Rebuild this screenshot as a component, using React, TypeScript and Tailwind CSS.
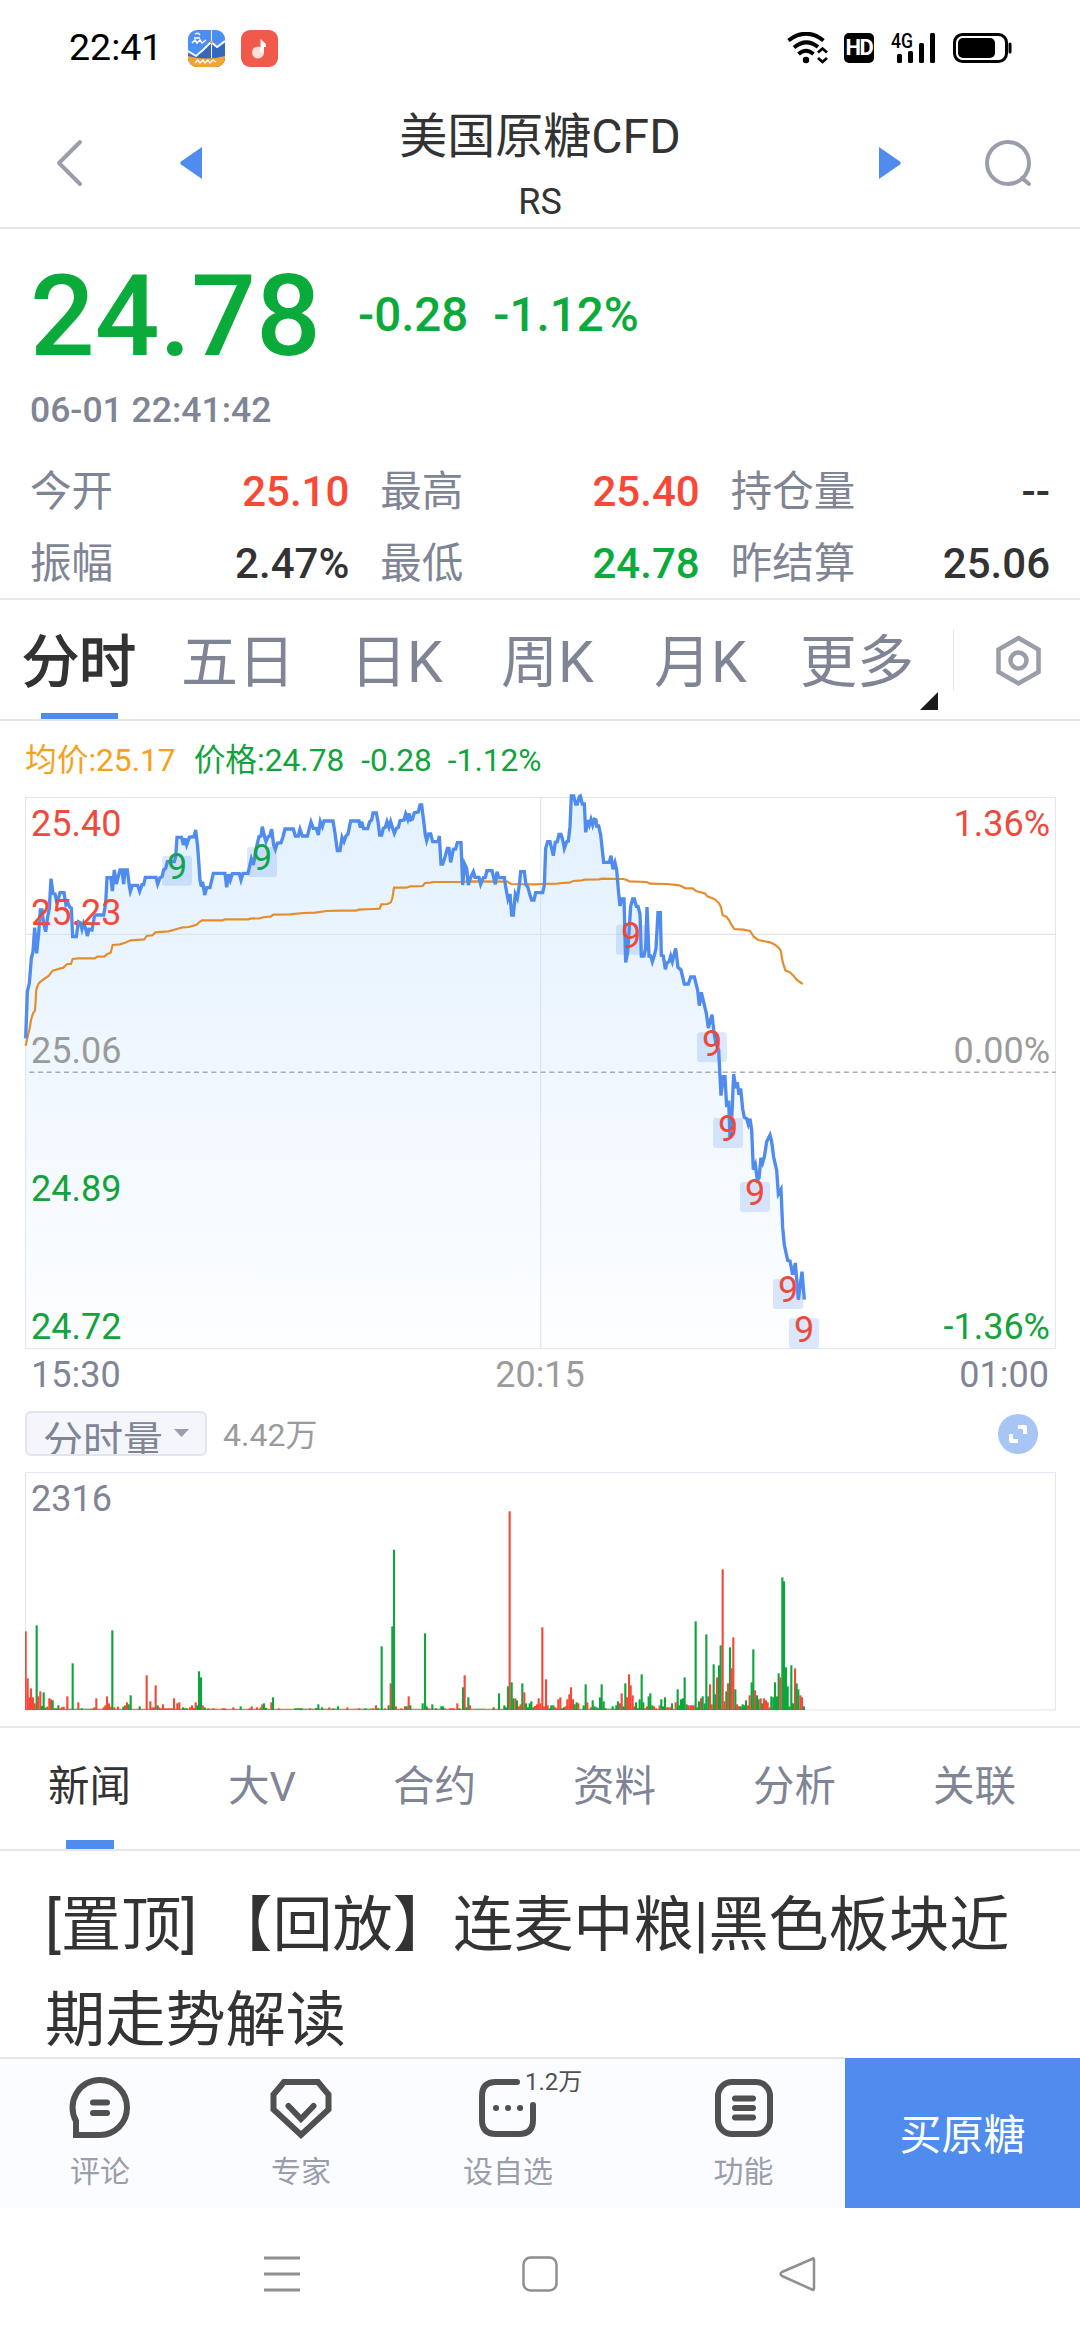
import type { ReactNode } from "react";

type Point = [number, number];

// Plot units are a third of a pixel
const PRICE_LINE: Point[] = [
  [77, 775], [82, 635], [88, 610], [94, 535], [99, 515], [104, 443], [110, 520], [116, 460], [121, 390], [126, 390],
  [131, 430], [137, 455], [143, 410], [148, 385], [153, 296], [159, 340], [165, 342], [171, 370], [180, 338], [192, 338],
  [198, 375], [204, 370], [210, 382], [214, 384], [218, 470], [229, 470], [235, 425], [241, 428], [246, 448], [251, 430],
  [257, 445], [262, 468], [267, 448], [276, 450], [284, 405], [311, 405], [317, 370], [321, 293], [333, 293], [337, 333],
  [343, 270], [349, 312], [360, 270], [366, 270], [371, 312], [375, 270], [382, 270], [388, 318], [391, 334], [397, 316],
  [413, 316], [419, 334], [426, 314], [431, 314], [436, 292], [468, 292], [473, 312], [480, 293], [486, 290], [491, 270],
  [497, 265], [502, 245], [523, 245], [527, 230], [531, 172], [545, 172], [550, 195], [555, 175], [560, 195], [568, 172],
  [582, 170], [587, 150], [593, 200], [600, 300], [604, 320], [608, 305], [614, 345], [620, 323], [630, 323], [640, 280],
  [675, 280], [680, 322], [686, 283], [691, 300], [697, 281], [718, 281], [723, 300], [729, 280], [744, 280], [754, 237],
  [760, 255], [766, 222], [772, 190], [777, 170], [783, 168], [787, 140], [793, 168], [798, 185], [804, 170], [809, 168],
  [815, 148], [821, 195], [826, 208], [832, 190], [843, 188], [849, 170], [855, 147], [880, 147], [886, 168], [895, 168],
  [900, 148], [907, 168], [922, 168], [933, 126], [940, 145], [949, 145], [955, 165], [961, 125], [967, 140], [972, 123],
  [999, 123], [1005, 160], [1012, 212], [1020, 212], [1026, 172], [1032, 185], [1038, 168], [1044, 162], [1052, 123],
  [1077, 123], [1081, 143], [1085, 125], [1091, 146], [1103, 146], [1109, 125], [1115, 120], [1119, 99], [1129, 99],
  [1134, 125], [1139, 165], [1145, 165], [1150, 145], [1156, 142], [1161, 125], [1167, 142], [1172, 125], [1178, 145],
  [1183, 160], [1189, 145], [1195, 142], [1200, 122], [1212, 120], [1217, 102], [1223, 118], [1227, 100], [1232, 120],
  [1237, 118], [1243, 98], [1255, 96], [1260, 75], [1265, 75], [1270, 115], [1276, 165], [1280, 182], [1286, 162],
  [1292, 162], [1298, 185], [1314, 185], [1318, 168], [1323, 252], [1328, 252], [1334, 235], [1342, 205], [1347, 205],
  [1352, 247], [1360, 208], [1367, 207], [1372, 188], [1383, 188], [1388, 315], [1394, 252], [1400, 265], [1405, 315],
  [1412, 292], [1420, 275], [1425, 292], [1437, 292], [1442, 313], [1450, 293], [1456, 292], [1461, 272], [1476, 272],
  [1481, 292], [1486, 313], [1491, 275], [1496, 292], [1513, 293], [1517, 320], [1524, 358], [1530, 342], [1535, 405],
  [1540, 405], [1546, 342], [1552, 355], [1558, 315], [1562, 275], [1573, 275], [1578, 315], [1583, 320], [1590, 345],
  [1595, 360], [1602, 360], [1607, 338], [1628, 338], [1633, 315], [1637, 205], [1643, 185], [1650, 185], [1660, 227],
  [1666, 187], [1672, 185], [1677, 163], [1683, 163], [1688, 180], [1693, 205], [1700, 185], [1705, 183], [1710, 140],
  [1714, 48], [1721, 48], [1727, 72], [1732, 72], [1738, 50], [1741, 48], [1747, 72], [1753, 72], [1757, 157],
  [1763, 120], [1768, 135], [1773, 118], [1778, 135], [1783, 118], [1788, 120], [1790, 138], [1796, 138], [1802, 165],
  [1811, 247], [1828, 247], [1833, 227], [1839, 268], [1845, 248], [1850, 270], [1856, 340], [1860, 378], [1864, 357],
  [1872, 357], [1877, 547], [1883, 517], [1892, 379], [1898, 357], [1903, 357], [1909, 379], [1914, 379], [1920, 402],
  [1924, 528], [1932, 528], [1937, 505], [1941, 381], [1947, 528], [1952, 528], [1957, 545], [1963, 526], [1968, 505],
  [1974, 398], [1981, 398], [1984, 526], [1990, 528], [1996, 568], [2001, 549], [2007, 545], [2012, 528], [2017, 545],
  [2027, 505], [2034, 562], [2043, 570], [2053, 612], [2065, 612], [2072, 591], [2083, 591], [2093, 631], [2098, 677],
  [2104, 637], [2119, 700], [2125, 744], [2136, 704], [2142, 758], [2148, 792], [2156, 809], [2160, 890], [2163, 947],
  [2170, 890], [2175, 890], [2180, 981], [2186, 962], [2190, 1073], [2196, 999], [2201, 882], [2207, 924], [2212, 907],
  [2217, 944], [2222, 925], [2228, 987], [2233, 1012], [2240, 1016], [2245, 1033], [2250, 1016], [2255, 1050],
  [2260, 1169], [2266, 1154], [2272, 1200], [2277, 1194], [2283, 1133], [2288, 1148], [2293, 1131], [2300, 1085],
  [2310, 1065], [2315, 1085], [2321, 1131], [2330, 1171], [2335, 1242], [2343, 1228], [2348, 1343], [2353, 1395],
  [2363, 1441], [2370, 1443], [2378, 1484], [2386, 1449], [2395, 1559], [2406, 1475], [2413, 1559],
];

const AVERAGE_LINE: Point[] = [
  [77, 797], [84, 765], [88, 750], [93, 720], [99, 700], [105, 692], [109, 628], [116, 610], [122, 605], [132, 597],
  [146, 588], [158, 572], [172, 568], [190, 563], [202, 552], [213, 552], [218, 537], [235, 535], [285, 535], [292, 530],
  [313, 530], [322, 522], [332, 518], [338, 495], [360, 493], [375, 488], [392, 481], [433, 478], [440, 468], [458, 466],
  [466, 457], [505, 454], [530, 447], [548, 442], [566, 441], [590, 434], [598, 426], [606, 421], [668, 421], [675, 418],
  [745, 418], [750, 416], [778, 415], [793, 411], [812, 410], [820, 404], [870, 403], [910, 399], [945, 398], [980, 393],
  [1018, 392], [1068, 392], [1075, 389], [1120, 387], [1139, 386], [1144, 373], [1163, 372], [1172, 367], [1177, 355],
  [1182, 323], [1220, 323], [1230, 319], [1268, 318], [1275, 309], [1292, 308], [1300, 306], [1390, 306], [1400, 304],
  [1522, 305], [1533, 312], [1605, 313], [1620, 312], [1672, 311], [1685, 309], [1708, 308], [1720, 303], [1745, 301],
  [1755, 299], [1798, 298], [1805, 296], [1870, 297], [1880, 300], [1888, 304], [1940, 306], [1950, 311], [2000, 312],
  [2038, 316], [2057, 325], [2078, 325], [2088, 333], [2115, 340], [2122, 349], [2145, 358], [2157, 370], [2163, 382],
  [2168, 406], [2180, 411], [2187, 420], [2193, 432], [2203, 447], [2230, 449], [2250, 453], [2262, 471], [2275, 480],
  [2310, 487], [2325, 494], [2338, 505], [2342, 512], [2348, 545], [2356, 571], [2370, 577], [2380, 587], [2390, 599],
  [2408, 612],
];

// [x, height], a negative height is a falling minute
const VOLUME: Point[] = [
  [77, 236], [83, 95], [88, 38], [93, 65], [99, 38], [104, 20], [110, -254], [115, 41], [121, 56], [126, -12],
  [131, -53], [137, -7], [142, 10], [148, 35], [153, 32], [158, -29], [164, -5], [169, -5], [175, -14], [180, 5],
  [186, 8], [191, 10], [202, 41], [218, -140], [235, 23], [245, -5], [278, 5], [284, 8], [289, 35], [311, 8], [316, 14],
  [321, 41], [327, 20], [332, 10], [337, -239], [343, 8], [354, 10], [370, -10], [375, 14], [381, 23], [386, -17],
  [392, -44], [419, -11], [440, 104], [451, 26], [457, 8], [462, 8], [467, 74], [473, -14], [478, 8], [484, 5],
  [489, 17], [494, 5], [500, 5], [506, 5], [511, 5], [516, 5], [522, 35], [532, 20], [538, 23], [549, -8], [554, -5],
  [560, -5], [570, 8], [576, 14], [581, 6], [587, 23], [592, -14], [597, -116], [603, -98], [608, 14], [614, -8],
  [625, 5], [641, 5], [668, 5], [674, 5], [700, 8], [722, -11], [749, 5], [755, 11], [771, 8], [782, 8], [787, 17],
  [792, -20], [798, -6], [814, 23], [819, -38], [836, 5], [887, -5], [893, -5], [899, -5], [905, -5], [930, 5],
  [949, -6], [955, -17], [966, -8], [988, 8], [1000, -5], [1014, -11], [1042, 8], [1077, 5], [1096, -5], [1118, 5],
  [1128, 14], [1134, -5], [1145, -191], [1155, 5], [1166, -14], [1172, 80], [1177, -251], [1182, -481], [1188, 11],
  [1204, 5], [1215, 11], [1220, -11], [1226, 41], [1231, -14], [1268, -20], [1275, -230], [1280, -11], [1286, 5],
  [1297, -17], [1308, -5], [1324, -11], [1329, -11], [1335, 5], [1350, 5], [1356, 5], [1361, 5], [1372, 20],
  [1378, -5], [1389, -68], [1394, 104], [1399, -8], [1405, -38], [1410, 14], [1481, -8], [1497, -50], [1513, -14],
  [1518, -8], [1524, -71], [1529, 596], [1535, -83], [1540, -35], [1546, 35], [1551, -29], [1557, 11], [1562, 17],
  [1567, -80], [1573, 53], [1578, -20], [1584, -8], [1589, -20], [1594, -26], [1600, -8], [1605, 12], [1611, 17],
  [1616, 35], [1621, 20], [1627, 248], [1632, 11], [1638, 92], [1643, 14], [1649, -5], [1654, -14], [1660, -14],
  [1665, 8], [1670, 5], [1675, 32], [1681, 38], [1686, -5], [1692, -8], [1697, 11], [1702, 32], [1708, 47], [1713, 68],
  [1719, 32], [1724, -17], [1730, -23], [1735, 20], [1751, -14], [1757, -77], [1762, 23], [1773, 8], [1778, -29],
  [1784, -11], [1790, -8], [1795, -5], [1800, -38], [1805, -77], [1811, -26], [1816, -5], [1838, -11], [1849, -14],
  [1854, -26], [1860, 20], [1865, 50], [1870, -11], [1876, -80], [1881, 38], [1887, 107], [1892, 74], [1898, 44],
  [1903, 11], [1908, -23], [1914, -5], [1919, -32], [1925, -107], [1930, -23], [1935, 5], [1941, 11], [1946, -41],
  [1951, -50], [1957, -14], [1962, 11], [1968, 5], [1979, 14], [1984, -32], [1989, -11], [1995, -38], [2000, 8],
  [2005, 8], [2011, 8], [2016, -20], [2027, 23], [2033, -62], [2038, -14], [2043, -32], [2049, -35], [2054, -98],
  [2060, -17], [2065, 14], [2071, 14], [2076, 14], [2081, 14], [2087, -266], [2092, -8], [2097, -26], [2103, 35],
  [2108, -41], [2114, -20], [2119, -227], [2125, -41], [2130, 77], [2135, 17], [2141, -137], [2146, -47], [2151, 98],
  [2157, -134], [2162, -194], [2168, 422], [2173, 26], [2179, -56], [2184, 80], [2190, -188], [2195, 125], [2200, 218],
  [2206, -62], [2211, 17], [2217, 11], [2222, -11], [2228, -17], [2233, -14], [2238, -29], [2244, 14], [2249, 44],
  [2255, -83], [2260, -182], [2265, 59], [2271, -44], [2276, -32], [2282, 35], [2287, -20], [2292, 35], [2298, 29],
  [2303, 23], [2309, 8], [2314, -41], [2320, -38], [2325, -83], [2331, -41], [2336, -110], [2341, 98], [2347, -398],
  [2352, -386], [2358, -128], [2363, -71], [2368, -11], [2374, -134], [2379, -20], [2385, 125], [2390, -80],
  [2395, -62], [2401, 44], [2406, 38], [2412, -11],
];

// [left, top, rising]
const SIGNALS: [number, number, boolean][] = [
  [486, 227, true], [741, 201, true], [1848, 434, false], [2091, 757, false],
  [2139, 1014, false], [2220, 1206, false], [2319, 1497, false], [2367, 1615, false],
];

const QUOTES = [
  { label: "今开", value: "25.10", color: "text-[#f94836]" },
  { label: "最高", value: "25.40", color: "text-[#f94836]" },
  { label: "持仓量", value: "--", color: "text-[#333333]" },
  { label: "振幅", value: "2.47%", color: "text-[#333333]" },
  { label: "最低", value: "24.78", color: "text-[#0aab3a]" },
  { label: "昨结算", value: "25.06", color: "text-[#333333]" },
];

const NEWS_TABS = ["新闻", "大V", "合约", "资料", "分析", "关联"];

const toPoints = (points: Point[]) => points.map((p) => p.join(",")).join(" ");

function StatusBar() {
  return (
    <div className="flex h-24 items-center pl-[69px] pr-[67px] text-black">
      <span className="w-[119px] text-[37.500px] leading-none">22:41</span>
      <svg width="37" height="37" viewBox="0 0 37 37">
        <defs>
          <clipPath id="app">
            <rect width="37" height="37" rx="9" />
          </clipPath>
        </defs>
        <g clipPath="url(#app)">
          <rect width="37" height="37" fill="#4b8ff5" />
          <path d="M0 24 L8 27 L16 19 L23 14 L30 18 L37 13 V37 H0Z" fill="#3568bd" />
          <path d="M0 21 L8 26 L15 20 L23 12 L29 17 L37 11" fill="none" stroke="#fff" strokeWidth="1.8" />
          <path d="M23.5 0 V28" stroke="#fff" strokeWidth="1" />
          <circle cx="23.5" cy="12" r="1.6" fill="#f6a42b" />
          <path d="M0 26 Q18 31 37 26 V37 H0Z" fill="#f5a52d" />
          <path d="M7 4 q3 -2 5 1 M6 8 h6 M4 13 l3 -3 2 3 3 -3 2 3 4 -3" fill="none" stroke="#fff" strokeWidth="1.5" />
          <path d="M7 33 l3 -3 2 3 3 -3 2 3 3 -3 2 3 3 -3 3 2" fill="none" stroke="#fff" strokeWidth="1.3" />
        </g>
      </svg>
      <svg className="ml-[16px]" width="37" height="37" viewBox="0 0 37 37">
        <rect width="37" height="37" rx="9" fill="#f15a4b" />
        <circle cx="17" cy="22.5" r="6" fill="#fde0dc" />
        <path d="M19.5 9 L25 14 V17 L23 17 V23 H19.5Z" fill="#fff" />
      </svg>
      <div className="ml-auto flex items-center">
        <svg width="41" height="32" viewBox="0 0 41 32" fill="none" stroke="#000">
          <path d="M1.5 8.5 Q19 -5 36.5 8.5" strokeWidth="4" />
          <path d="M7 15.5 Q19 5.500 31 15" strokeWidth="4" />
          <path d="M11.500 22 Q19 15.500 26.500 22" strokeWidth="4" />
          <circle cx="19" cy="28" r="3.200" fill="#000" stroke="none" />
          <path d="M31 20.500 L35.500 16.500 L40 20.500 M31 26 L35.500 30 L40 26" strokeWidth="2.800" />
        </svg>
        <span className="ml-[16px] flex h-[30px] w-[30px] items-center justify-center rounded-[5px] bg-black text-[22px] font-bold leading-none tracking-[-1.5px] text-white">
          HD
        </span>
        <svg className="ml-[17px] overflow-visible" width="45" height="32" viewBox="0 0 45 32">
          <text x="0" y="15.500" fontSize="20" fontWeight="500" textLength="22" lengthAdjust="spacingAndGlyphs">4G</text>
          <rect x="6" y="22" width="5" height="9" rx="1.500" />
          <rect x="17" y="19" width="5" height="12" rx="1.500" />
          <rect x="28" y="11" width="5" height="20" rx="1.500" />
          <rect x="39" y="1" width="5" height="30" rx="1.500" />
        </svg>
        <svg className="ml-[17px]" width="60" height="32" viewBox="0 0 60 32">
          <rect x="1.500" y="2.500" width="52" height="27" rx="8" fill="none" stroke="#000" strokeWidth="3" />
          <rect x="5" y="6" width="37" height="20" rx="5" />
          <rect x="55.500" y="10.500" width="3" height="11" rx="1.500" />
        </svg>
      </div>
    </div>
  );
}

function Header() {
  return (
    <div className="flex h-[133px] items-center justify-between border-b-2 border-[#e4e6ec] pl-[56px] pr-[47px] pt-[2px]">
      <div className="flex w-[191px] items-center">
        <svg width="27" height="48" viewBox="0 0 27 48" fill="none" stroke="#9a9eaa" strokeWidth="4" strokeLinecap="round" strokeLinejoin="round">
          <path d="M24 3 L3 24 L24 45" />
        </svg>
        <svg className="ml-[97px]" width="22" height="34" viewBox="0 0 22 34">
          <path d="M22 1 V33 L1 18.500 Q-0.500 17 1 15.500Z" fill="#4f8cee" />
        </svg>
      </div>
      <div className="flex flex-col items-center pt-[5px] text-[#333333]">
        <h1 className="h-[66px] text-[48px] leading-[66px]">美国原糖CFD</h1>
        <span className="mt-[7px] text-[36px] leading-[50px]">RS</span>
      </div>
      <div className="flex w-[200px] items-center justify-end">
        <svg className="mr-[83px]" width="22" height="34" viewBox="0 0 22 34">
          <path d="M0 1 V33 L21 18.500 Q22.500 17 21 15.500Z" fill="#4f8cee" />
        </svg>
        <svg width="49" height="50" viewBox="0 0 49 50" fill="none" stroke="#9a9eaa" strokeWidth="4">
          <circle cx="24" cy="25" r="21" />
          <path d="M38 40 L45 46" strokeLinecap="round" />
        </svg>
      </div>
    </div>
  );
}

function Quote() {
  return (
    <div className="h-[371px] border-b-2 border-[#e8e8ec] pl-[30px] pr-[30px] pt-[27px]">
      <div className="flex h-[120px] items-center font-medium text-[#0aab3a]">
        <span className="w-[328px] text-[114px] leading-[120px]">24.78</span>
        <span className="text-[47.500px]">-0.28</span>
        <span className="ml-[25px] text-[47.500px]">-1.12%</span>
      </div>
      <div className="mt-[10px] text-[35.500px] font-medium leading-[48px] text-[#808595]">06-01 22:41:42</div>
      <div className="mt-[22px] grid grid-cols-3 gap-x-[31px]">
        {QUOTES.map((q) => (
          <div key={q.label} className="flex h-[72px] items-center justify-between text-[42px] leading-none">
            <span className="text-[41.500px] text-[#808595]">{q.label}</span>
            <span className={`font-medium ${q.color}`}>{q.value}</span>
          </div>
        ))}
      </div>
    </div>
  );
}

function PeriodTabs() {
  return (
    <div className="flex h-[121px] border-b-2 border-[#e4e6ec] text-[57px] leading-[125px] text-[#808595]">
      <div className="relative ml-[22px] w-[159px] text-[#333333] [-webkit-text-stroke:1.5px_#333333]">
        分时
        <span className="absolute bottom-0 left-[19px] h-[6px] w-[77px] bg-[#4f8cee]" />
      </div>
      <div className="w-[169px]">五日</div>
      <div className="w-[151px]">日K</div>
      <div className="w-[153px]">周K</div>
      <div className="w-[146px]">月K</div>
      <div className="relative w-[153px]">
        更多
        <svg className="absolute bottom-[9px] right-[15px]" width="18" height="18" viewBox="0 0 18 18">
          <path d="M18 0 V18 H0Z" fill="#1a1a1a" />
        </svg>
      </div>
      <div className="mt-[30px] h-[60px] w-px bg-[#e0e2ea]" />
      <svg className="ml-[41px] mt-[34px]" width="47" height="54" viewBox="0 0 47 54" fill="none" stroke="#9a9eaa" strokeWidth="4.500">
        <path d="M23.500 4 L43.500 15.500 V38 L23.500 49.500 L3.500 38 V15.500Z" />
        <circle cx="23.500" cy="26.500" r="8" />
      </svg>
    </div>
  );
}

function PriceChart() {
  const area = `77,1707 ${toPoints(PRICE_LINE)} 2413,1707`;
  return (
    <svg className="block overflow-visible" width="1031" height="552" viewBox="75 51 3093 1656">
      <defs>
        <linearGradient id="area" gradientUnits="userSpaceOnUse" x1="0" y1="51" x2="0" y2="1707">
          <stop offset="0" stopColor="#e3f1ff" />
          <stop offset="1" stopColor="#fdfeff" />
        </linearGradient>
      </defs>
      <polygon points={area} fill="url(#area)" />
      <g fill="none" stroke="#e4e6f0" strokeWidth="3.500">
        <rect x="76.500" y="52.500" width="3090" height="1653" />
        <path d="M77 463 H3167 M1622 52 V1706" stroke="#d9dfea" strokeOpacity="0.8" />
      </g>
      <path d="M88 877 H3167" stroke="#a9acb6" strokeWidth="4.500" strokeDasharray="15 11" />
      <polyline points={toPoints(AVERAGE_LINE)} fill="none" stroke="#e58d2b" strokeWidth="6.500" />
      <polyline points={toPoints(PRICE_LINE)} fill="none" stroke="#4f8cee" strokeWidth="10" />
      <g fontSize="108">
        {SIGNALS.map(([x, y, up]) => (
          <g key={x}>
            <rect x={x} y={y} width="90" height="90" rx="9" fill="#4f8cee" fillOpacity="0.2" />
            <text x={x + 45} y={y + 70} textAnchor="middle" fill={up ? "#12a54a" : "#ee4a3c"}>9</text>
          </g>
        ))}
        <g fill="#f04a3c">
          <text x="93" y="168">25.40</text>
          <text x="93" y="435">25.23</text>
          <text x="3150" y="168" textAnchor="end">1.36%</text>
        </g>
        <g fill="#9b9b9b">
          <text x="93" y="849">25.06</text>
          <text x="3150" y="849" textAnchor="end">0.00%</text>
        </g>
        <g fill="#12a33c">
          <text x="93" y="1263">24.89</text>
          <text x="93" y="1676">24.72</text>
          <text x="3150" y="1676" textAnchor="end">-1.36%</text>
        </g>
      </g>
    </svg>
  );
}

function VolumeChart() {
  return (
    <svg className="mt-[16px] block" width="1031" height="239" viewBox="75 -25 3093 717">
      <rect x="76.500" y="-23.500" width="3090" height="712" fill="none" stroke="#e4e6f0" strokeWidth="3.500" />
      <path d="M77 687 H2414" stroke="#f0705f" strokeWidth="4" />
      <path d="M205 687 H275 M600 687 H640 M880 687 H1010 M1060 687 H1150 M1290 687 H1330 M1420 687 H1455 M1800 687 H1900" stroke="#4fb573" strokeWidth="4" />
      {VOLUME.map(([x, h]) => (
        <rect key={x} x={x - 3.2} y={689 - Math.abs(h)} width="6.400" height={Math.abs(h)} fill={h > 0 ? "#f4493a" : "#0fa53e"} />
      ))}
      <text x="93" y="93" fontSize="108" fill="#808595">2316</text>
    </svg>
  );
}

function ChartPanel() {
  return (
    <div className="px-[25px]">
      <div className="flex h-[76px] items-center pt-[4px] text-[31.700px] leading-none text-[#12a33c]">
        <span className="text-[#f5a11c]">均价:25.17</span>
        <span className="ml-[18px]">价格:24.78</span>
        <span className="ml-[17px]">-0.28</span>
        <span className="ml-[16px]">-1.12%</span>
      </div>
      <PriceChart />
      <div className="flex h-[51px] items-center justify-between px-[6px] text-[36px] leading-none text-[#808595]">
        <span>15:30</span>
        <span className="text-[#9b9b9b]">20:15</span>
        <span>01:00</span>
      </div>
      <div className="mt-[11px] flex h-[45px] items-center">
        <button className="flex h-[45px] w-[182px] items-center overflow-hidden rounded-[6px] border-2 border-[#e2e4ee] bg-[#f4f6fc] pl-[16px] text-left text-[40px] leading-none text-[#808595]">
          <span className="pt-[16px]">分时量</span>
          <svg className="ml-[11px]" width="15" height="9" viewBox="0 0 15 9">
            <path d="M0 0 H15 L7.500 8Z" fill="#9a9eaa" />
          </svg>
        </button>
        <span className="ml-[16px] pt-[2px] text-[32px] leading-none text-[#9b9b9b]">4.42万</span>
        <svg className="ml-auto mr-[17px]" width="40" height="40" viewBox="0 0 40 40">
          <circle cx="20" cy="20" r="20" fill="#a7c6f6" />
          <path d="M20 13 H27 V20 M13 20 V27 H20" fill="none" stroke="#fff" strokeWidth="4" strokeLinejoin="round" />
        </svg>
      </div>
      <VolumeChart />
    </div>
  );
}

function NewsTabs() {
  return (
    <div className="mt-[15px] flex h-[125px] justify-between border-y-2 border-[#e6e7ec] pl-[48px] pr-[64px] text-[41.500px] leading-[118px] text-[#808595]">
      {NEWS_TABS.map((tab, i) => (
        <div key={tab} className={i === 0 ? "relative text-[#333333]" : ""}>
          {tab}
          {i === 0 && <span className="absolute bottom-0 left-[18px] h-[9px] w-[48px] bg-[#4f8cee]" />}
        </div>
      ))}
    </div>
  );
}

function Action({ label, className, children }: { label: string; className: string; children: ReactNode }) {
  return (
    <div className={`flex flex-col items-center pt-[17px] ${className}`}>
      <svg className="overflow-visible" width="64" height="64" viewBox="0 0 64 64" fill="none" stroke="#505050" strokeWidth="6">
        {children}
      </svg>
      <span className="mt-[10px] text-[30px] leading-[44px] text-[#9a9eaa]">{label}</span>
    </div>
  );
}

function ActionBar() {
  return (
    <div className="flex h-[151px] bg-[#fbfcff]">
      <div className="flex flex-1 border-t-2 border-[#e4e6ec]">
        <Action label="评论" className="w-[200px]">
          <path d="M32 4 A27 27.500 0 1 1 32 59 H8 V45 A27 27.500 0 0 1 32 4Z" />
          <path d="M25 26.500 H39 M25 37 H39" strokeLinecap="round" />
        </Action>
        <Action label="专家" className="w-[202px]">
          <path d="M15 6 H49 L59.500 18.500 V33.500 L32 59 L4.500 33.500 V18.500Z" />
          <path d="M19.500 30 L32 43 L44.500 30" strokeLinecap="round" />
        </Action>
        <Action label="设自选" className="w-[212px]">
          <path d="M41 6 H20 Q6 6 6 20 V44 Q6 58 20 58 H43 Q57 58 57 44 V29" strokeLinecap="round" />
          <path d="M20 32 h0.100 M32 32 h0.100 M44 32 h0.100" strokeLinecap="round" />
          <text x="49" y="14" fontSize="24" fill="#505050" stroke="none">1.2万</text>
        </Action>
        <Action label="功能" className="w-[231px] pl-[29px] pr-[1px]">
          <rect x="6" y="6" width="52" height="52" rx="14" />
          <path d="M23 22.500 H41 M23 32 H41 M23 41.500 H41" strokeLinecap="round" />
        </Action>
      </div>
      <button className="mt-px w-[235px] bg-[#4f8cee] pt-[4px] text-[42px] text-white">买原糖</button>
    </div>
  );
}

function NavigationBar() {
  return (
    <div className="flex flex-1 items-center justify-between bg-white px-[262px]">
      <svg width="40" height="40" viewBox="0 0 40 40" stroke="#8f8f8f" strokeWidth="3">
        <path d="M2 4 H38 M2 20 H38 M2 36 H38" />
      </svg>
      <svg width="40" height="40" viewBox="0 0 40 40" fill="none" stroke="#8f8f8f" strokeWidth="2.500">
        <rect x="3.500" y="3.500" width="33" height="33" rx="7" />
      </svg>
      <svg width="40" height="40" viewBox="0 0 40 40" fill="none" stroke="#8f8f8f" strokeWidth="2.500" strokeLinejoin="round">
        <path d="M34 5 Q36 3 36 6 V34 Q36 37 34 35.500 L4 22 Q1 20 4 18Z" />
      </svg>
    </div>
  );
}

export default function App() {
  return (
    <div className="flex h-[2340px] w-[1080px] flex-col overflow-hidden bg-white font-[Roboto,'Noto_Sans_CJK_SC',sans-serif]">
      <StatusBar />
      <Header />
      <Quote />
      <PeriodTabs />
      <ChartPanel />
      <NewsTabs />
      <div className="h-[206px] overflow-hidden pl-[45px] pr-[60px] pt-[27px] text-[60.200px] leading-[95px] text-[#333333]">
        [置顶] 【回放】连麦中粮|黑色板块近期走势解读
      </div>
      <ActionBar />
      <NavigationBar />
    </div>
  );
}
